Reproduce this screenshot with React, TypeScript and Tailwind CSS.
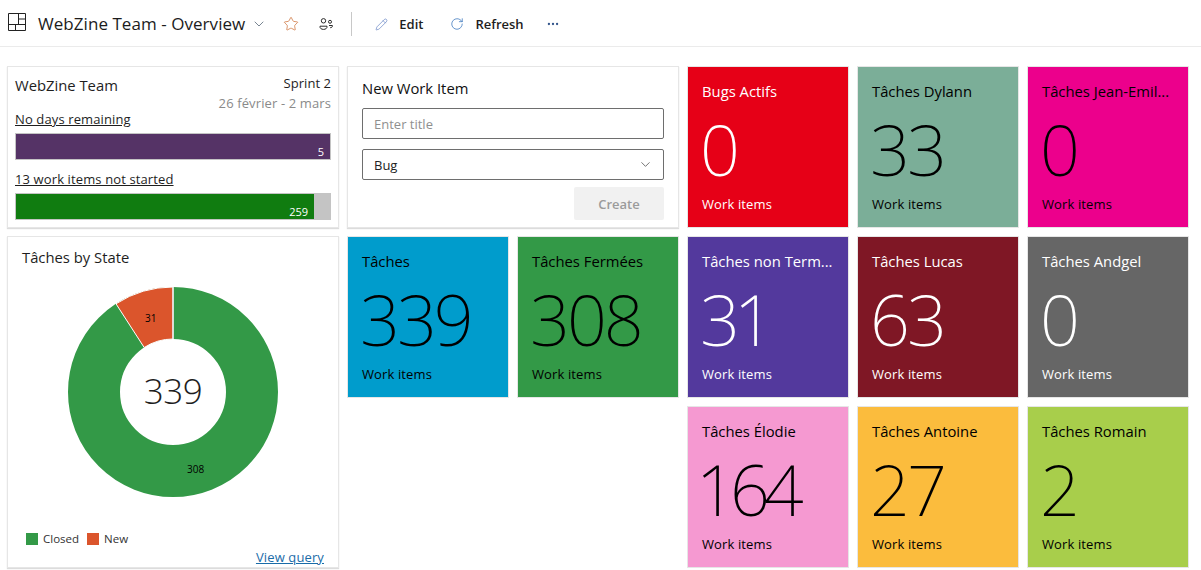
import { ChevronDown, Ellipsis, Pencil, RotateCw, Star } from "lucide-react";

const sans = "font-['Open_Sans','Noto_Sans',sans-serif]";
const num = "font-['Noto_Sans','Open_Sans',sans-serif] font-extralight";
const widget = "shadow-[0_0_0_1px_#e6e6e6,0_1px_1px_1px_#dcdcdc]";

type TileProps = {
  title: string;
  count: number;
  bg: string;
  dark?: boolean;
  // the "1" sits wider here than in the original font
  numClass?: string;
};

function Tile({ title, count, bg, dark, numClass = "tracking-[-3px] -ml-[2px]" }: TileProps) {
  return (
    <div
      className={`h-[160px] w-[160px] flex flex-col px-3.5 pt-[12px] shadow-[0_0_0_1px_#e6e6e6] ${bg} ${dark ? "text-black" : "text-white"}`}
    >
      <div className="text-[14.8px] leading-[24px] whitespace-nowrap">{title}</div>
      <div className={`text-[70px] leading-[76px] mt-[8px] ${num} ${numClass}`}>{count}</div>
      <div className="text-[13px] leading-[18px] mt-[8px] tracking-[0.12px]">Work items</div>
    </div>
  );
}

function Donut() {
  return (
    <svg width="212" height="212" viewBox="0 0 212 212" className="block">
      <circle cx="106" cy="106" r="79" fill="none" stroke="#339947" strokeWidth="52" />
      <path d="M106 1 A105 105 0 0 0 49 17.8 L77.2 61.5 A53 53 0 0 1 106 53 Z" fill="#db552c" stroke="#fff" strokeWidth="1" />
      <path d="M106 1 L106 53" stroke="#e8e8e8" strokeWidth="1.5" />
    </svg>
  );
}

function TeamIcon() {
  return (
    <svg width="14" height="12" viewBox="0 0 14 12" fill="none" stroke="#2b2b2b" strokeWidth="1" className="ml-[20px] shrink-0">
      <circle cx="4.5" cy="2.8" r="2.2" />
      <circle cx="11" cy="3.8" r="1.5" />
      <path d="M1 8.2h7c.4 2-1.4 3.2-3.5 3.2S.6 10.2 1 8.2z" />
      <path d="M10 7.5h3.4c.3 1.4-.8 2.2-2.2 2.2" />
    </svg>
  );
}

export default function App() {
  return (
    <div className={`h-[570px] w-[1201px] overflow-hidden bg-white text-[#1e1e1e] ${sans}`}>
      {/* Header */}
      <div className="h-[47px] flex items-center border-b border-[#ebebeb] pl-2 pt-0.5">
        <svg width="18" height="18" viewBox="0 0 18 18" fill="none" stroke="#222" strokeWidth="1" className="shrink-0 -mt-1">
          <path d="M.5.5h17v17H.5zM.5 11.5h17M10.5.5v11M10.5 6h7M7.5 11.5v6" />
        </svg>
        <span className="ml-[12px] text-[17px] tracking-[0.05px] text-[#1c1c1c]">WebZine Team - Overview</span>
        <ChevronDown size={16} strokeWidth={1} className="ml-[6px] text-[#33475b]" />
        <Star size={16} strokeWidth={1.2} className="ml-[16px] text-[#d07a45]" />
        <TeamIcon />
        <div className="ml-[18px] h-6 w-px bg-[#c8c8c8]" />
        <Pencil size={13} strokeWidth={1.2} className="ml-[23px] text-[#5b7bc0]" />
        <span className="ml-[11px] mt-px text-[13px] font-semibold">Edit</span>
        <RotateCw size={14} strokeWidth={1.2} className="ml-[27px] text-[#2b6cb8]" />
        <span className="ml-[11px] mt-px text-[13px] font-semibold">Refresh</span>
        <Ellipsis size={14} className="ml-[22px] text-[#33558b]" />
      </div>

      {/* Dashboard */}
      <div className="flex gap-[10px] pl-2 pt-5">
        <div className="flex flex-col gap-[10px] w-[330px]">
          {/* Sprint widget */}
          <div className={`h-[160px] px-[7px] pt-[8px] ${widget}`}>
            <div className="flex justify-between">
              <div className="text-[14.8px] leading-[22px] -mt-px">WebZine Team</div>
              <div className="text-right -mt-px">
                <div className="text-[13px] leading-[19px] tracking-[0.05px]">Sprint 2</div>
                <div className="text-[13px] leading-[20px] tracking-[0.12px] text-[#8a8a8a]">26 février - 2 mars</div>
              </div>
            </div>
            <div className="text-[13px] leading-[16px] mt-[-2px] underline tracking-[0.12px]">No days remaining</div>
            <div className="mt-[6px] h-[27px] border border-[#c4c4c4] bg-[#553366] flex items-end justify-end pr-1.5 text-white text-[11px] leading-[15px]">5</div>
            <div className="text-[13px] leading-[16px] mt-[11px] underline tracking-[0.12px]">13 work items not started</div>
            <div className="mt-[6px] h-[27px] border border-[#c4c4c4] bg-[#c4c4c4] flex">
              <div className="w-[298px] bg-[#107c10] flex items-end justify-end pr-1.5 text-white text-[11px] leading-[15px]">259</div>
            </div>
          </div>

          {/* Chart widget */}
          <div className={`relative h-[330px] ${widget}`}>
            <div className="px-[14px] pt-[8px] text-[14.8px] leading-[24px]">Tâches by State</div>
            <div className="relative ml-[59px] mt-[17px] w-[212px] h-[212px]">
              <Donut />
              <span className="absolute left-0 right-0 top-[83px] text-center text-[35px] leading-[44px] font-light tracking-[-0.5px]">339</span>
              <span className="absolute left-[78px] top-[25px] text-[10px] leading-[14px] text-black">31</span>
              <span className="absolute left-[120px] top-[176px] text-[10px] leading-[14px] text-black">308</span>
            </div>
            <div className="flex items-center mt-[32px] ml-[18px] text-[11.5px] text-[#333]">
              <span className="w-3 h-3 bg-[#339947] mr-[5px]" />
              <span>Closed</span>
              <span className="w-3 h-3 bg-[#db552c] ml-2 mr-[5px]" />
              <span>New</span>
            </div>
            <a className="absolute right-[14px] bottom-px text-[13px] leading-[18px] underline text-[#1a6ca8] tracking-[0.12px]">View query</a>
          </div>
        </div>

        <div className="flex flex-col gap-[10px] w-[330px]">
          {/* New work item */}
          <div className={`h-[160px] px-[14px] pt-[9px] ${widget}`}>
            <div className="text-[14.8px] leading-[24px] text-[#111]">New Work Item</div>
            <div className="mt-[8px] h-[31px] border border-[#6e6e6e] rounded-[2px] flex items-center px-[11px] pt-[2px] text-[13px] text-[#8f8f8f]">Enter title</div>
            <div className="mt-[10px] h-[31px] border border-[#6e6e6e] rounded-[2px] flex items-center justify-between pl-[11px] pr-[10px] pt-[2px] text-[13px] text-[#222]">
              Bug
              <ChevronDown size={15} strokeWidth={1} className="-mt-[2px]" />
            </div>
            <div className="flex justify-end mt-[7px]">
              <div className="w-[90px] h-[33px] rounded-[2px] bg-[#f1f1f1] pt-[2px] text-[#9b9b9b] text-[13px] font-semibold flex items-center justify-center">Create</div>
            </div>
          </div>
          <div className="flex gap-[10px]">
            <Tile title="Tâches" count={339} bg="bg-[#009ccc]" dark />
            <Tile title="Tâches Fermées" count={308} bg="bg-[#339947]" dark />
          </div>
        </div>

        {/* Tile grid */}
        <div className="grid grid-cols-[160px_160px_160px] gap-[10px] h-fit">
          <Tile title="Bugs Actifs" count={0} bg="bg-[#e60017]" />
          <Tile title="Tâches Dylann" count={33} bg="bg-[#7bae98]" dark />
          <Tile title="Tâches Jean-Emil..." count={0} bg="bg-[#ec008c]" dark />
          <Tile title="Tâches non Term..." count={31} bg="bg-[#53399d]" numClass="tracking-[-6px] -ml-[2px]" />
          <Tile title="Tâches Lucas" count={63} bg="bg-[#7f1725]" />
          <Tile title="Tâches Andgel" count={0} bg="bg-[#666666]" />
          <Tile title="Tâches Élodie" count={164} bg="bg-[#f599d1]" dark numClass="tracking-[-6px] -ml-[6px]" />
          <Tile title="Tâches Antoine" count={27} bg="bg-[#fbbc3d]" dark />
          <Tile title="Tâches Romain" count={2} bg="bg-[#a8ce4b]" dark />
        </div>
      </div>
    </div>
  );
}
